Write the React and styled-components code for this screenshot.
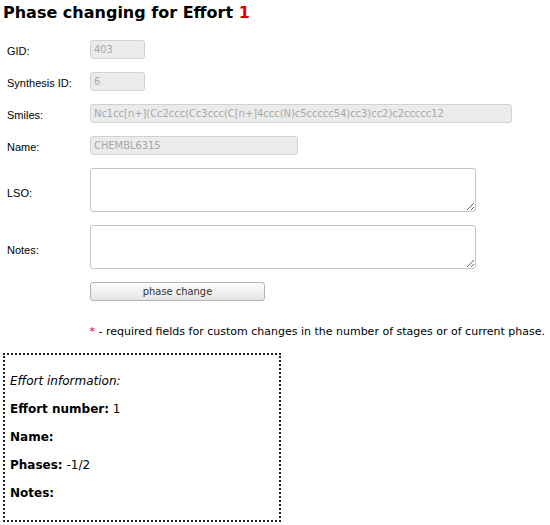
import React from 'react';
import styled, { createGlobalStyle } from 'styled-components';

const GlobalStyle = createGlobalStyle`
    body {
        margin: 0;
        background: #fff;
        font-family: "Liberation Sans", Arial, sans-serif;
    }
`;

const Page = styled.div`
    padding: 0 5px 0 3px;
    width: 550px;
    box-sizing: border-box;
`;

const Title = styled.h1`
    margin: 0;
    font-family: "DejaVu Sans", Verdana, sans-serif;
    font-size: 16px;
    line-height: 26px;
    font-weight: bold;
    color: #000;
`;

const Red = styled.span`
    color: #e00000;
`;

const Form = styled.div`
    display: grid;
    grid-template-columns: 87px auto;
    row-gap: 13px;
    margin-top: 14px;
    align-items: center;
    justify-items: start;
`;

const Label = styled.label`
    padding-left: 4px;
    font-size: 11px;
    line-height: 13px;
    color: #000;
    padding-top: ${p => (p.$tall ? '6px' : '4px')};
`;

const Field = styled.input`
    box-sizing: border-box;
    height: 19px;
    width: ${p => p.$w}px;
    margin: 0;
    padding: 0 3px;
    border: 1px solid #d2d2d2;
    border-radius: 3px;
    background: #ebebeb;
    color: #a8a8a8;
    font-family: "DejaVu Sans Condensed", "Open Sans", sans-serif;
    font-size: 11px;
    outline: none;
`;

const Area = styled.textarea`
    box-sizing: border-box;
    width: 386px;
    height: 44px;
    border: 1px solid #c4c4c4;
    border-radius: 3px;
    background: #fff;
    margin: 0;
    display: block;
`;

const Button = styled.button`
    box-sizing: border-box;
    width: 175px;
    height: 19px;
    margin: 0;
    padding: 0;
    border: 1px solid #b4b4b4;
    border-radius: 3px;
    background: linear-gradient(#fdfdfd, #e4e4e4);
    color: #333;
    font-family: "DejaVu Sans Condensed", "Open Sans", sans-serif;
    font-size: 11px;
`;

const Note = styled.p`
    margin: 24px 0 0;
    text-align: right;
    font-family: "DejaVu Sans", Verdana, sans-serif;
    font-size: 11px;
    line-height: 13px;
    color: #000;
`;

const Star = styled.span`
    color: #e00000;
`;

const InfoBox = styled.div`
    margin-top: 15px;
    width: 278px;
    height: 169px;
    box-sizing: border-box;
    border: 2px dotted #222;
    padding: 12px 5px 0;
    font-family: "DejaVu Sans", Verdana, sans-serif;
    font-size: 12px;
    color: #000;
`;

const InfoLine = styled.div`
    line-height: 28px;
    font-style: ${p => (p.$italic ? 'italic' : 'normal')};
`;

const fields = [
    { label: 'GID:', value: '403', width: 55 },
    { label: 'Synthesis ID:', value: '6', width: 55 },
    { label: 'Smiles:', value: 'Nc1cc[n+](Cc2ccc(Cc3ccc(C[n+]4ccc(N)c5ccccc54)cc3)cc2)c2ccccc12', width: 422 },
    { label: 'Name:', value: 'CHEMBL6315', width: 208 },
];

export default function App() {
    return (
        <Page>
            <GlobalStyle />
            <Title>Phase changing for Effort <Red>1</Red></Title>
            <Form>
                {fields.map(f => (
                    <React.Fragment key={f.label}>
                        <Label>{f.label}</Label>
                        <Field $w={f.width} value={f.value} readOnly />
                    </React.Fragment>
                ))}
                <Label $tall>LSO:</Label>
                <Area />
                <Label $tall>Notes:</Label>
                <Area />
                <span />
                <Button>phase change</Button>
            </Form>
            <Note><Star>*</Star> - required fields for custom changes in the number of stages or of current phase.</Note>
            <InfoBox>
                <InfoLine $italic>Effort information:</InfoLine>
                <InfoLine><b>Effort number:</b> 1</InfoLine>
                <InfoLine><b>Name:</b></InfoLine>
                <InfoLine><b>Phases:</b> -1/2</InfoLine>
                <InfoLine><b>Notes:</b></InfoLine>
            </InfoBox>
        </Page>
    );
}
